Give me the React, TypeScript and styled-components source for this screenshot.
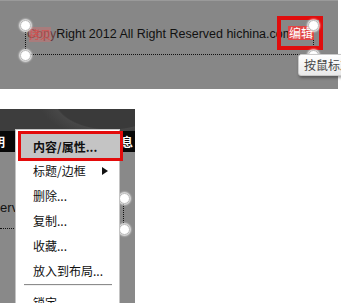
import React from "react";
import styled, { createGlobalStyle } from "styled-components";

const Global = createGlobalStyle`
  html, body { margin: 0; padding: 0; background: #ffffff; }
  body { width: 341px; height: 303px; overflow: hidden; font-family: "Liberation Sans", Arial, sans-serif; }
`;

const Page = styled.div`
  display: flex;
  flex-direction: column;
  align-items: flex-start;
  gap: 20px;
  width: 341px;
  height: 303px;
`;

/* ---------- top screenshot ---------- */
const Canvas = styled.div`
  position: relative;
  width: 338px;
  height: 89px;
  box-sizing: border-box;
  background: #878787;
  border-top: 1px solid #9a9a9a;
  padding: 23px 0 0 25px;
`;

const Selection = styled.div<{ $w: number; $h: number }>`
  position: relative;
  box-sizing: border-box;
  width: ${(p) => p.$w}px;
  height: ${(p) => p.$h}px;
  border-left: 1px dotted #111;
  border-right: 1px dotted #111;
  border-bottom: 1px dotted #111;
`;

const CopyText = styled.div`
  font-family: "Liberation Sans", Arial, sans-serif;
  font-size: 12.5px;
  line-height: 15px;
  color: #111;
  white-space: nowrap;
  padding: 3px 0 0 1px;
`;

const Marked = styled.span`
  position: relative;
  color: #6a3b3b;
`;

const MarkedOverlay = styled.span`
  position: absolute;
  left: 2px;
  top: 0;
  font-family: "Noto Sans CJK SC", sans-serif;
  font-size: 11px;
  line-height: 15px;
  color: rgba(220, 70, 70, 0.75);
  background: rgba(210, 110, 110, 0.45);
`;

const Handle = styled.span<{ $x: number; $y: number }>`
  position: absolute;
  left: ${(p) => p.$x - 5}px;
  top: ${(p) => p.$y - 5}px;
  width: 9px;
  height: 9px;
  border-radius: 50%;
  background: #ffffff;
  border: 1px solid #b8b8b8;
  box-shadow: 0 0 2px 1px rgba(255, 255, 255, 0.9);
`;

const EditFrame = styled.div`
  position: absolute;
  left: 277px;
  top: 15px;
  width: 46px;
  height: 34px;
  box-sizing: border-box;
  border: 4px solid #e00d0d;
  display: flex;
  align-items: center;
  justify-content: center;
`;

const EditLabel = styled.span`
  background: #e04545;
  color: #ffffff;
  font-family: "Noto Sans CJK SC", sans-serif;
  font-size: 12px;
  line-height: 14px;
  padding: 0 1px;
  margin-left: 2px;
`;

const Tooltip = styled.div`
  position: absolute;
  left: 298px;
  top: 53px;
  width: 50px;
  height: 22px;
  box-sizing: border-box;
  padding: 2px 0 0 5px;
  background: linear-gradient(#ffffff, #e9e9e9);
  border: 1px solid #c9c9c9;
  border-radius: 3px;
  box-shadow: 1px 2px 3px rgba(0, 0, 0, 0.35);
  font-family: "Noto Sans CJK SC", sans-serif;
  font-size: 12px;
  line-height: 16px;
  color: #444;
  white-space: nowrap;
`;

/* ---------- bottom screenshot ---------- */
const Editor = styled.div`
  position: relative;
  width: 135px;
  height: 194px;
  overflow: hidden;
  display: flex;
  flex-direction: column;
  background: #898989;
`;

const Header = styled.div`
  height: 22px;
  background: radial-gradient(ellipse 90px 50px at 110px -10px, #3a3a3a 60%, #474747 62%, #3d3d3d 80%);
`;

const NavBand = styled.div`
  height: 21px;
  background: #080808;
  display: flex;
  justify-content: space-between;
  align-items: center;
  color: #fff;
  font-family: "Noto Sans CJK SC", sans-serif;
  font-weight: 700;
  font-size: 12px;
  overflow: hidden;
`;

const NavText = styled.span<{ $shift: number }>`
  margin-left: ${(p) => p.$shift}px;
  margin-right: ${(p) => (p.$shift < 0 ? 0 : 2)}px;
`;

const Body = styled.div`
  flex: 1;
  padding-top: 46px;
`;

const Selection2 = styled.div`
  position: relative;
  width: 124px;
  height: 31px;
  box-sizing: border-box;
  border-right: 1px dotted #111;
  border-bottom: 1px dotted #111;
`;

const BodyText = styled.div`
  font-family: "Liberation Sans", Arial, sans-serif;
  font-size: 13px;
  line-height: 15px;
  color: #111;
  white-space: nowrap;
  margin-left: -23px;
  padding-top: 2px;
`;

const Menu = styled.div`
  position: absolute;
  left: 15px;
  top: 20px;
  width: 105px;
  height: 200px;
  box-sizing: border-box;
  background: #ffffff;
  border: 1px solid #c4c4c4;
  padding-top: 4px;
  display: flex;
  flex-direction: column;
  font-family: "Noto Sans CJK SC", sans-serif;
  font-size: 12px;
  color: #111;
`;

const Item = styled.div<{ $active?: boolean }>`
  position: relative;
  display: flex;
  align-items: center;
  flex-shrink: 0;
  height: ${(p) => (p.$active ? 24 : 25)}px;
  margin-left: 5px;
  width: 99px;
  padding-left: 12px;
  box-sizing: border-box;
  font-weight: ${(p) => (p.$active ? 700 : 400)};
  background: ${(p) => (p.$active ? "#c4c4c4" : "transparent")};
  outline: ${(p) => (p.$active ? "3px solid #e30b0b" : "none")};
  white-space: nowrap;
`;

const Arrow = styled.span`
  position: absolute;
  left: 81px;
  top: 9px;
  width: 0;
  height: 0;
  border-left: 6px solid #111;
  border-top: 4px solid transparent;
  border-bottom: 4px solid transparent;
`;

const Separator = styled.div`
  flex-shrink: 0;
  height: 1px;
  margin: 1px 7px 4px 8px;
  background: #8c8c8c;
  border-bottom: 1px solid #f0f0f0;
`;

export default function App() {
  return (
    <>
      <Global />
      <Page>
        <Canvas>
          <Selection $w={289} $h={31}>
            <CopyText>
              <Marked>
                Copy
                <MarkedOverlay>拷贝</MarkedOverlay>
              </Marked>
              Right 2012 All Right Reserved hichina.com
            </CopyText>
          </Selection>
          <EditFrame>
            <EditLabel>编辑</EditLabel>
          </EditFrame>
          <Handle $x={25} $y={24} />
          <Handle $x={25} $y={54} />
          <Handle $x={313} $y={24} />
          <Handle $x={313} $y={54} />
          <Tooltip>按鼠标左键</Tooltip>
        </Canvas>

        <Editor>
          <Header />
          <NavBand>
            <NavText $shift={-7}>明</NavText>
            <NavText $shift={0}>信息</NavText>
          </NavBand>
          <Body>
            <Selection2>
              <BodyText>Reserved hichina.com</BodyText>
              <Handle $x={124} $y={0} />
              <Handle $x={124} $y={31} />
            </Selection2>
          </Body>
          <Menu>
            <Item $active>内容/属性...</Item>
            <Item>
              标题/边框
              <Arrow />
            </Item>
            <Item>删除...</Item>
            <Item>复制...</Item>
            <Item>收藏...</Item>
            <Item>放入到布局...</Item>
            <Separator />
            <Item>锁定</Item>
          </Menu>
        </Editor>
      </Page>
    </>
  );
}
